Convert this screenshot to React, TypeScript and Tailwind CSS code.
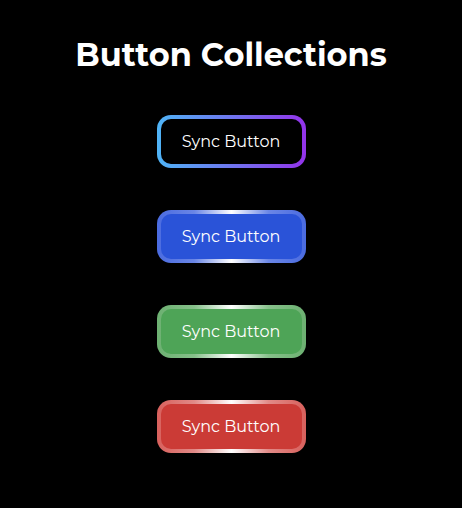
import React from "react";

const btns = [
  {
    outer: "bg-[linear-gradient(90deg,#4fb4f6_0%,#6b7cf0_45%,#9333ea_100%)]",
    inner: "bg-black",
  },
  {
    outer:
      "bg-[linear-gradient(90deg,#4a6be0_0%,#6a86e6_25%,#ffffff_50%,#6a86e6_75%,#4a6be0_100%)]",
    inner: "bg-[#2a53d8]",
  },
  {
    outer:
      "bg-[linear-gradient(90deg,#6cb071_0%,#86c08a_25%,#ffffff_50%,#86c08a_75%,#6cb071_100%)]",
    inner: "bg-[#4ea457]",
  },
  {
    outer:
      "bg-[linear-gradient(90deg,#d8605c_0%,#e18a87_25%,#ffffff_50%,#e18a87_75%,#d8605c_100%)]",
    inner: "bg-[#cb3b36]",
  },
];

export default function App() {
  return (
    <div className="w-[462px] h-[508px] bg-black flex flex-col items-center pt-[34px] font-[Montserrat,'Open_Sans',sans-serif]">
      <h1 className="text-white text-[32px] font-bold leading-[42px]">
        Button Collections
      </h1>
      <div className="mt-[39px] flex flex-col items-center gap-[42px]">
        {btns.map((b, i) => (
          <div
            key={i}
            className={`w-[149px] h-[53px] rounded-[14px] p-[4px] ${b.outer}`}
          >
            <div
              className={`w-full h-full rounded-[10px] flex items-center justify-center text-white text-[16px] ${b.inner}`}
            >
              Sync Button
            </div>
          </div>
        ))}
      </div>
    </div>
  );
}
